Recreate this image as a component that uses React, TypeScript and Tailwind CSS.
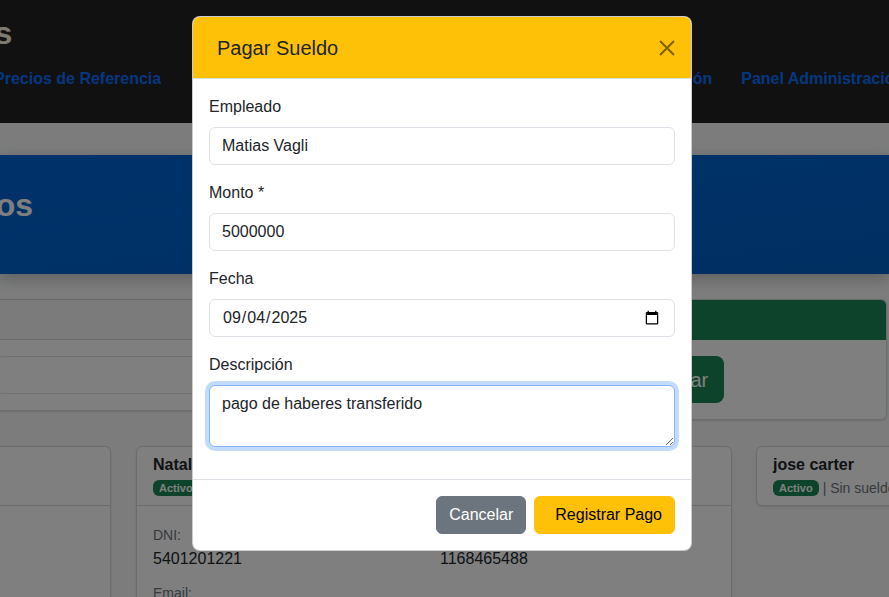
import { useState } from 'react'

function NavLink({ children }: { children: string }) {
  return <span className="whitespace-nowrap text-base font-bold leading-6 text-[#0d6efd]">{children}</span>
}

function Badge() {
  return (
    <span className="inline-flex h-4 items-center rounded-md bg-[#198754] px-[6px] text-[11px] font-bold leading-none text-white">
      Activo
    </span>
  )
}

function EmployeeCard({
  name,
  dni,
  phone,
  email,
  className,
  collapsed,
}: {
  name: string
  dni?: string
  phone?: string
  email?: string
  className: string
  collapsed?: boolean
}) {
  return (
    <div className={`shrink-0 rounded-md border border-black/15 bg-white shadow-sm ${className}`}>
      <div className={`px-4 pb-[8px] pt-[6px] ${collapsed ? '' : 'border-b border-black/15'}`}>
        <div className="text-base font-bold leading-6 text-[#212529]">{name}</div>
        <div className="mt-[2px] flex h-[18px] items-center gap-1 text-sm text-[#6c757d]">
          <Badge />
          <span>| Sin sueldo registrado</span>
        </div>
      </div>
      {!collapsed && (
        <div className="flex px-4 pt-[19px]">
          <div className="w-[287px]">
            <div className="text-sm leading-[21px] text-[#6c757d]">DNI:</div>
            <div className="mb-3 text-base leading-[25px] text-[#212529]">{dni}</div>
            <div className="text-sm leading-[21px] text-[#6c757d]">Email:</div>
            <div className="text-base leading-6 text-[#212529]">{email}</div>
          </div>
          <div>
            <div className="text-sm leading-[21px] text-[#6c757d]">Teléfono:</div>
            <div className="mb-3 text-base leading-[25px] text-[#212529]">{phone}</div>
          </div>
        </div>
      )}
    </div>
  )
}

function Field({ label, children }: { label: string; children: React.ReactNode }) {
  return (
    <div className="mb-4">
      <label className="mb-2 block text-base leading-6 text-[#212529]">{label}</label>
      {children}
    </div>
  )
}

const inputCls =
  'block h-[38px] w-full rounded-md border border-[#dee2e6] bg-white px-3 text-base text-[#212529] outline-none'

export default function App() {
  const [empleado] = useState('Matias Vagli')
  const [monto, setMonto] = useState('5000000')
  const [fecha, setFecha] = useState('2025-09-04')
  const [desc, setDesc] = useState('pago de haberes transferido')

  return (
    <div className="relative h-[597px] w-[889px] overflow-hidden bg-[#f8f9fa] font-['Liberation_Sans',Arial,sans-serif]">
      {/* page behind the modal */}
      <nav className="h-[123px] bg-[#222222] pt-[14px]">
        <div className="-ml-[290px] w-[300px] whitespace-nowrap text-right text-[32px] font-bold leading-[38px] text-[#fff4e4]">
          Sistema de Sueldos
        </div>
        <div className="mt-[15px] flex items-center">
          <div className="-ml-[6px] shrink-0">
            <NavLink>Precios de Referencia</NavLink>
          </div>
          <div className="ml-[30px] flex w-[521px] shrink-0 justify-between">
            <NavLink>Sueldos</NavLink>
            <NavLink>Gastos</NavLink>
            <NavLink>Facturación</NavLink>
          </div>
          <div className="ml-[29px] shrink-0">
            <NavLink>Panel Administración</NavLink>
          </div>
        </div>
      </nav>

      <div className="mt-[32px] h-[119px] bg-gradient-to-br from-[#0066d6] to-[#005ec4] pt-[31px] shadow-[0_4px_14px_rgba(0,0,0,0.25)]">
        <div className="-ml-[300px] w-[333px] whitespace-nowrap text-right text-[32px] font-bold leading-[38px] text-white">
          Gestión de Sueldos
        </div>
      </div>

      <div className="mt-[25px] flex items-start">
        <div className="-ml-[20px] w-[609px] shrink-0 rounded-md border border-black/15 bg-white shadow-sm">
          <div className="h-[40px] border-b border-black/15 bg-black/[0.03]" />
          <div className="p-4">
            <div className="h-[38px] rounded-md border border-[#dee2e6]" />
          </div>
        </div>
        <div className="ml-[24px] w-[274px] shrink-0 overflow-hidden rounded-md border border-black/15 bg-white shadow-sm">
          <div className="h-[40px] bg-[#198754]" />
          <div className="p-4">
            <button className="h-[47px] rounded-lg bg-[#198754] px-4 text-xl text-white">Buscar</button>
          </div>
        </div>
      </div>

      <div className="mt-[26px] flex items-start">
        <EmployeeCard
          className="-ml-[485px] w-[596px]"
          name="Juan Perez"
          dni="3012345678"
          phone="1134567890"
          email="juan@mail.com"
        />
        <EmployeeCard
          className="ml-[25px] w-[596px]"
          name="Natalia Gomez"
          dni="5401201221"
          phone="1168465488"
          email="natalia@mail.com"
        />
        <EmployeeCard className="ml-[24px] w-[596px]" name="jose carter" collapsed />
      </div>

      {/* backdrop */}
      <div className="absolute inset-0 bg-[rgba(0,0,0,0.5)]" />

      {/* modal */}
      <div className="absolute left-[192px] top-[16px] w-[500px] overflow-hidden rounded-lg border border-black/20 bg-white">
        <div className="flex h-[62px] items-center justify-between border-b border-[#dee2e6] bg-[#ffc107] pl-[24px] pr-[16px]">
          <h5 className="text-xl leading-[30px] text-[#212529]">Pagar Sueldo</h5>
          <svg width="16" height="16" viewBox="0 0 16 16" className="text-black/50">
            <path d="M1 1L15 15M15 1L1 15" stroke="currentColor" strokeWidth="2" />
          </svg>
        </div>

        <div className="px-4 pb-4 pt-4">
          <Field label="Empleado">
            <input className={inputCls} value={empleado} readOnly />
          </Field>
          <Field label="Monto *">
            <input className={inputCls} value={monto} onChange={(e) => setMonto(e.target.value)} />
          </Field>
          <Field label="Fecha">
            <input
              type="date"
              className={inputCls}
              value={fecha}
              onChange={(e) => setFecha(e.target.value)}
            />
          </Field>
          <Field label="Descripción">
            <textarea
              rows={2}
              className="block h-[62px] w-full resize-y rounded-md border border-[#86b7fe] bg-white px-3 py-[6px] text-base leading-6 text-[#212529] shadow-[0_0_0_4px_rgba(13,110,253,0.25)] outline-none"
              value={desc}
              onChange={(e) => setDesc(e.target.value)}
            />
          </Field>
        </div>

        <div className="flex justify-end gap-2 border-t border-[#dee2e6] py-4 pl-[15px] pr-[16px]">
          <button className="h-[38px] rounded-md border border-[#6c757d] bg-[#6c757d] px-3 text-base text-white">
            Cancelar
          </button>
          <button className="h-[38px] rounded-md border border-[#ffc107] bg-[#ffc107] pl-[20px] pr-3 text-base text-black">
            Registrar Pago
          </button>
        </div>
      </div>
    </div>
  )
}
